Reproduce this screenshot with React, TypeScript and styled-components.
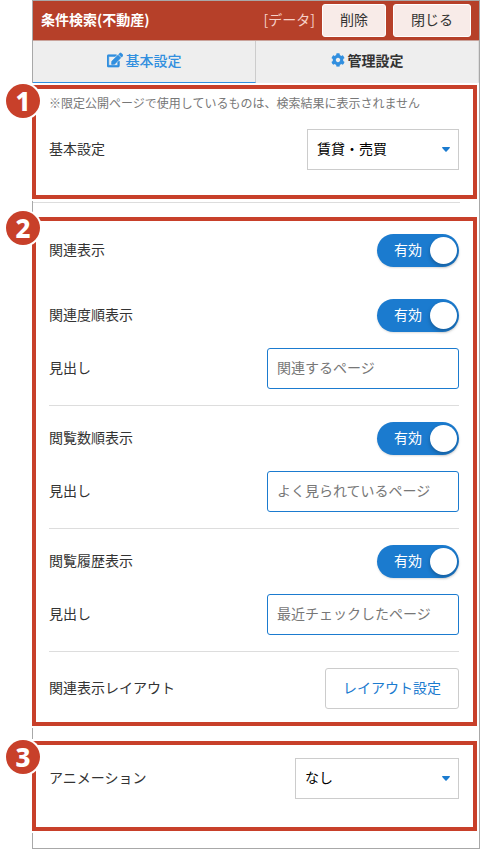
import React, { useState } from "react";
import styled, { createGlobalStyle } from "styled-components";
import { FaCog, FaEdit } from "react-icons/fa";

const color = {
  header: "#b64029",
  callout: "#c8402a",
  blue: "#1b7bcf",
  link: "#318fdf",
  text: "#333",
  muted: "#777",
  line: "#ddd",
  frame: "#a8a8a8",
};

const GlobalStyle = createGlobalStyle`
  *, *::before, *::after { box-sizing: border-box; }
  body {
    margin: 0;
    background: #fff;
    color: ${color.text};
    font-family: "Noto Sans CJK JP", "Noto Sans", sans-serif;
    font-size: 14px;
    line-height: 20px;
  }
  button, input, select { font: inherit; }
`;

const Panel = styled.main`
  margin-left: 32px;
  padding-bottom: 17px;
  border: 1px solid ${color.frame};
`;

const Header = styled.header`
  display: flex;
  align-items: center;
  gap: 7px;
  height: 40px;
  padding: 0 8px;
  background: ${color.header};
  border-bottom: 1px solid #c9a39b;
  color: #fff;
`;

const Title = styled.h1`
  flex: 1;
  margin: 0;
  padding-bottom: 4px;
  font-size: 14px;
  font-weight: 700;
`;

const DataTag = styled.span`
  padding-bottom: 4px;
  color: #f6d0c8;
`;

const HeaderButton = styled.button`
  height: 33px;
  padding: 0 17px 4px;
  border: 1px solid #fff;
  border-radius: 3px;
  background: #f8ebe8;
  color: ${color.text};
`;

const Tabs = styled.nav`
  display: grid;
  grid-template-columns: 1fr 1fr;
  background: #eee;
`;

const Tab = styled.button<{ $active: boolean }>`
  display: flex;
  align-items: center;
  justify-content: center;
  gap: 3px;
  height: 42px;
  padding: 0 0 4px;
  border: 0;
  border-right: 1px solid #ccc;
  border-bottom: 1px solid ${(p) => (p.$active ? color.link : "#eee")};
  background: transparent;
  color: ${(p) => (p.$active ? color.link : color.text)};
  font-weight: ${(p) => (p.$active ? 500 : 700)};

  &:last-child { border-right-color: #ddd; }
`;

const EditIcon = styled(FaEdit)`
  color: ${color.link};
  stroke-width: 20px;
`;

const CogIcon = styled(FaCog)`
  color: ${color.link};
`;

const Callout = styled.section<{ $pad: string; $gap?: number }>`
  position: relative;
  margin: ${(p) => p.$gap ?? 0}px 2px 0 -1px;
  padding: ${(p) => p.$pad};
  border: 4px solid ${color.callout};
  background: #fff;
  box-shadow: 0 0 0 2px #fff;
`;

const Badge = styled.span<{ $raised?: boolean }>`
  position: absolute;
  top: ${(p) => (p.$raised ? -10 : -5)}px;
  left: -30px;
  width: 34px;
  height: 34px;
  border-radius: 50%;
  background: ${color.callout};
  box-shadow: 0 0 0 2px #fff;
  color: #fff;
  font: 800 26px/34px "Noto Sans", sans-serif;
  text-align: center;
`;

const Note = styled.p`
  margin: 0 0 16px;
  color: ${color.muted};
  font-size: 12px;
`;

const Separator = styled.hr`
  height: 1px;
  margin: 3px 19px 14px 0;
  border: 0;
  background: ${color.line};
`;

const Group = styled.div<{ $plain?: boolean }>`
  display: grid;
  gap: 16px;
  padding: 16px 0;
  border-bottom: ${(p) => (p.$plain ? 0 : 1)}px solid ${color.line};

  &:first-of-type { padding-top: 0; }
  &:last-of-type { padding-bottom: 0; }
`;

const Row = styled.div`
  display: flex;
  align-items: center;
  justify-content: space-between;
`;

const RowLabel = styled.label`
  padding-bottom: 4px;
`;

const SelectBox = styled.span<{ $width: number }>`
  position: relative;
  width: ${(p) => p.$width}px;

  svg {
    position: absolute;
    top: 18px;
    right: 9px;
    pointer-events: none;
  }
`;

const Select = styled.select`
  display: block;
  width: 100%;
  height: 41px;
  padding: 0 24px 4px 9px;
  border: 1px solid #ccc;
  border-radius: 0;
  appearance: none;
  background: #fff;
  color: #000;
`;

const TextInput = styled.input`
  width: 192px;
  height: 41px;
  padding: 0 9px 4px;
  border: 1px solid ${color.blue};
  border-radius: 3px;
  color: ${color.text};

  &::placeholder { color: ${color.muted}; opacity: 1; }
`;

const Track = styled.label<{ $on: boolean }>`
  display: flex;
  flex-direction: ${(p) => (p.$on ? "row" : "row-reverse")};
  align-items: center;
  justify-content: space-between;
  width: 82px;
  height: 33px;
  padding: ${(p) => (p.$on ? "0 2px 0 17px" : "0 17px 0 2px")};
  border-radius: 17px;
  background: ${(p) => (p.$on ? color.blue : "#aaa")};
  box-shadow: 0 1px 2px #0002;
  color: #fff;
  cursor: pointer;
`;

const ToggleText = styled.span`
  padding-bottom: 4px;
`;

const Knob = styled.input`
  width: 27px;
  height: 27px;
  margin: 0;
  border-radius: 50%;
  appearance: none;
  background: #fff;
  box-shadow: 0 2px 4px #0004;
  cursor: pointer;
`;

const OutlineButton = styled.button`
  height: 41px;
  padding: 0 17px 4px;
  border: 1px solid #ccc;
  border-radius: 3px;
  background: #fff;
  color: ${color.blue};
`;

function Toggle({ id }: { id: string }) {
  const [on, setOn] = useState(true);
  return (
    <Track $on={on}>
      <ToggleText>{on ? "有効" : "無効"}</ToggleText>
      <Knob id={id} type="checkbox" checked={on} onChange={(e) => setOn(e.target.checked)} />
    </Track>
  );
}

function SelectField({ id, width, options }: { id: string; width: number; options: string[] }) {
  return (
    <SelectBox $width={width}>
      <Select id={id}>
        {options.map((o) => (
          <option key={o}>{o}</option>
        ))}
      </Select>
      <svg width="8" height="5" viewBox="0 0 8 5" aria-hidden="true">
        <path d="M0 .8Q0 0 .8 0H7.2Q8 0 8 .8L4.6 4.6Q4 5 3.4 4.6Z" fill={color.blue} />
      </svg>
    </SelectBox>
  );
}

const rankings = [
  { id: "related", label: "関連度順表示", placeholder: "関連するページ" },
  { id: "views", label: "閲覧数順表示", placeholder: "よく見られているページ" },
  { id: "history", label: "閲覧履歴表示", placeholder: "最近チェックしたページ" },
];

export default function App() {
  const [tab, setTab] = useState("basic");
  return (
    <>
      <GlobalStyle />
      <Panel>
        <Header>
          <Title>条件検索(不動産)</Title>
          <DataTag>[データ]</DataTag>
          <HeaderButton type="button">削除</HeaderButton>
          <HeaderButton type="button">閉じる</HeaderButton>
        </Header>
        <Tabs>
          <Tab type="button" $active={tab === "basic"} onClick={() => setTab("basic")}>
            <EditIcon size={16} />
            基本設定
          </Tab>
          <Tab type="button" $active={tab === "admin"} onClick={() => setTab("admin")}>
            <CogIcon size={14} />
            管理設定
          </Tab>
        </Tabs>

        <Callout $pad="4px 14px 25px 13px" $gap={2}>
          <Badge>1</Badge>
          <Note>※限定公開ページで使用しているものは、検索結果に表示されません</Note>
          <Row>
            <RowLabel htmlFor="basic">基本設定</RowLabel>
            <SelectField id="basic" width={152} options={["賃貸・売買", "賃貸", "売買"]} />
          </Row>
        </Callout>

        <Separator />

        <Callout $pad="13px 14px 13px 13px">
          <Badge $raised>2</Badge>
          <Group $plain>
            <Row>
              <RowLabel htmlFor="show">関連表示</RowLabel>
              <Toggle id="show" />
            </Row>
          </Group>
          {rankings.map((r) => (
            <Group key={r.id}>
              <Row>
                <RowLabel htmlFor={r.id}>{r.label}</RowLabel>
                <Toggle id={r.id} />
              </Row>
              <Row>
                <RowLabel htmlFor={`${r.id}-title`}>見出し</RowLabel>
                <TextInput id={`${r.id}-title`} type="text" placeholder={r.placeholder} />
              </Row>
            </Group>
          ))}
          <Group $plain>
            <Row>
              <RowLabel htmlFor="layout">関連表示レイアウト</RowLabel>
              <OutlineButton id="layout" type="button">レイアウト設定</OutlineButton>
            </Row>
          </Group>
        </Callout>

        <Callout $pad="13px 14px 28px 13px" $gap={15}>
          <Badge>3</Badge>
          <Row>
            <RowLabel htmlFor="animation">アニメーション</RowLabel>
            <SelectField id="animation" width={164} options={["なし", "あり"]} />
          </Row>
        </Callout>
      </Panel>
    </>
  );
}
